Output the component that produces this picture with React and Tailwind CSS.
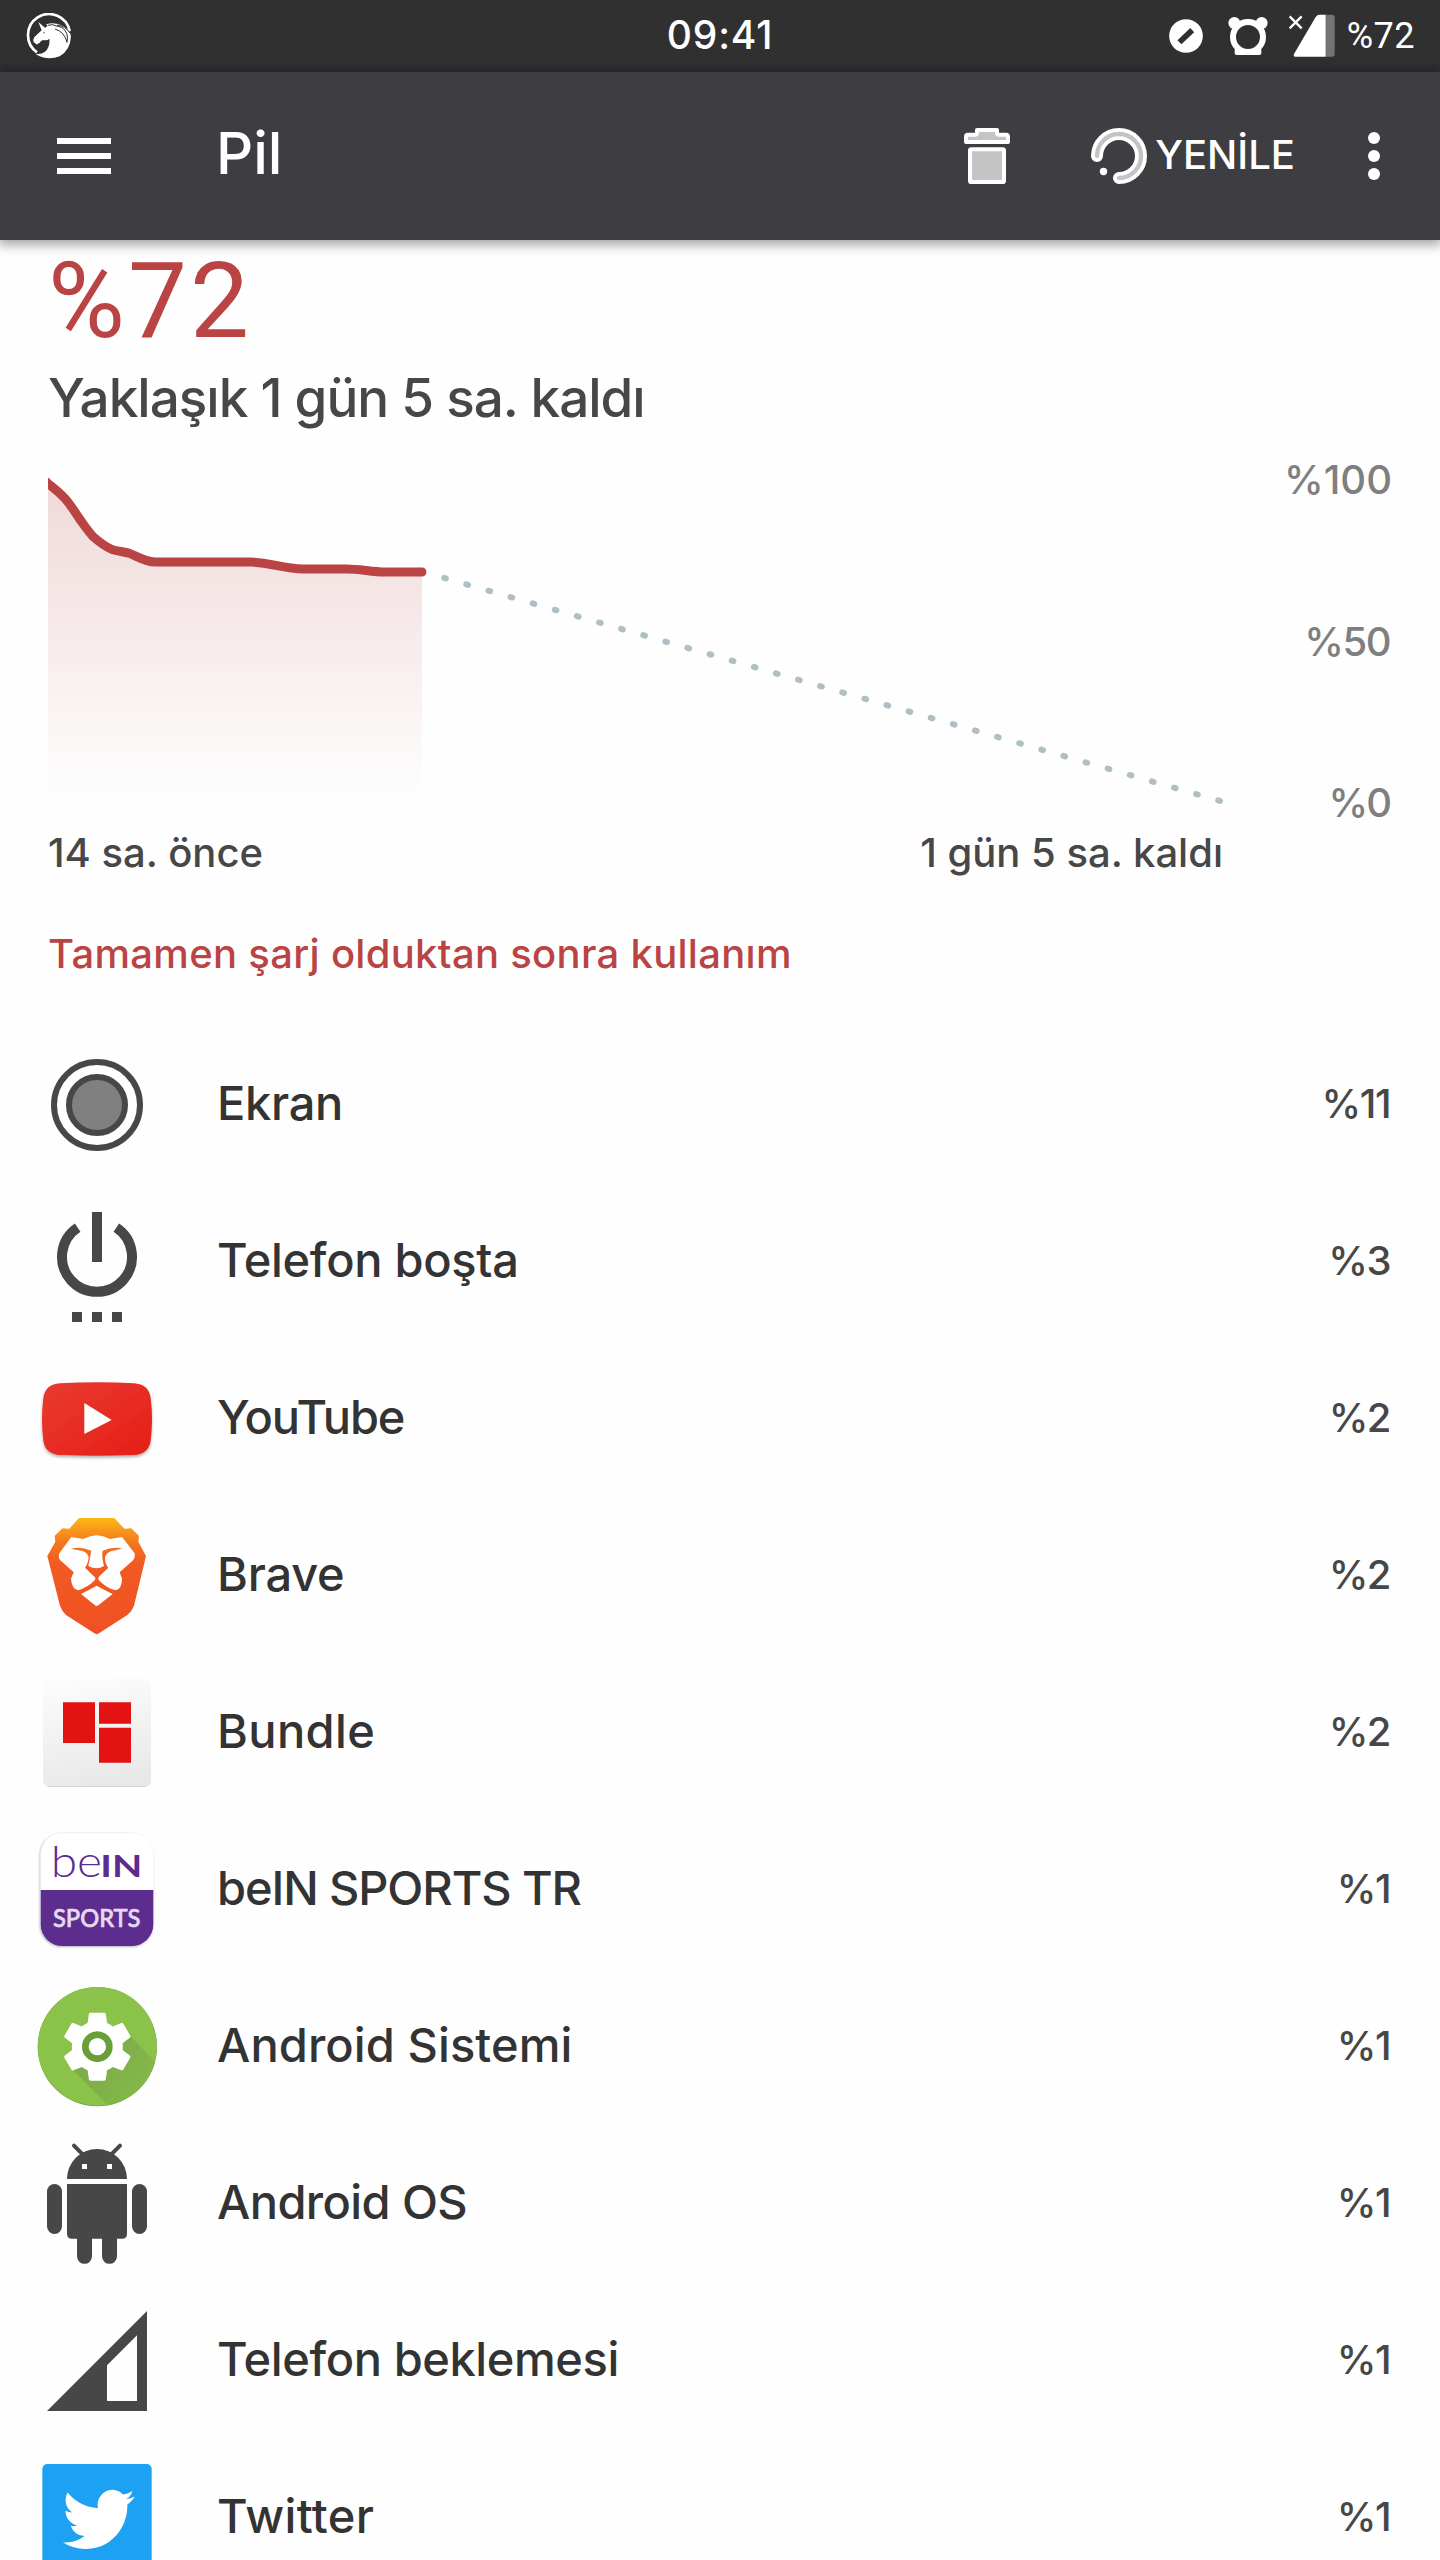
const apps = [
  { name: "Ekran", value: "%11", Icon: ScreenIcon, track: "tracking-[-0.3px]" },
  { name: "Telefon boşta", value: "%3", Icon: IdleIcon, track: "tracking-[-0.3px]" },
  { name: "YouTube", value: "%2", Icon: YouTubeIcon, track: "tracking-[-1.1px]" },
  { name: "Brave", value: "%2", Icon: BraveIcon, track: "tracking-[-0.2px]" },
  { name: "Bundle", value: "%2", Icon: BundleIcon, track: "tracking-[0.4px]" },
  { name: "beIN SPORTS TR", value: "%1", Icon: BeinIcon, track: "tracking-[-1.1px]" },
  { name: "Android Sistemi", value: "%1", Icon: SystemIcon, track: "tracking-[0.1px]" },
  { name: "Android OS", value: "%1", Icon: AndroidIcon, track: "tracking-[-0.6px]" },
  { name: "Telefon beklemesi", value: "%1", Icon: StandbyIcon, track: "tracking-[-0.4px]" },
  { name: "Twitter", value: "%1", Icon: TwitterIcon, track: "tracking-[0.4px]" },
];

export default function App() {
  return (
    <div className="w-[1440px] h-[2560px] overflow-hidden bg-[#fefefe] font-['Inter',sans-serif] font-[450] text-[#474747]">
      <StatusBar />
      <Toolbar />
      <main>
        <section className="pl-12">
          <h2 className="pt-[3px] text-[105px] leading-[118px] tracking-[3px] font-[450] text-[#ba4444] font-['Roboto',sans-serif]">%72</h2>
          <p className="text-[53px] leading-[74px] tracking-[-1px]">Yaklaşık 1 gün 5 sa. kaldı</p>
          <div className="mt-6 flex h-[365px]">
            <BatteryChart />
            <div className="flex flex-1 flex-col justify-between pr-12 text-right text-[40px] leading-[42px] text-[#7f7f7f]">
              <span>%100</span>
              <span className="pr-[2px] tracking-[-1.5px]">%50</span>
              <span className="pr-[2px] tracking-[-2px]">%0</span>
            </div>
          </div>
          <div className="flex w-[1175px] justify-between text-[40px] leading-[58px]">
            <span>14 sa. önce</span>
            <span>1 gün 5 sa. kaldı</span>
          </div>
        </section>
        <h3 className="mt-[42px] pl-12 text-[40px] leading-[60px] tracking-[0.3px] text-[#ba4444]">Tamamen şarj olduktan sonra kullanım</h3>
        <ul className="mt-10">
          {apps.map(({ name, value, Icon, track }) => (
            <li key={name} className="flex h-[157px] items-center pt-px pl-[37px] pr-[50px]">
              <Icon />
              <span className={`ml-[60px] flex-1 text-[47px] text-[#333] ${track}`}>{name}</span>
              <span className="pt-px text-[40px] tracking-[-1.5px]">{value}</span>
            </li>
          ))}
        </ul>
      </main>
    </div>
  );
}

function StatusBar() {
  return (
    <div className="grid h-[72px] grid-cols-3 items-center bg-[#303031] pb-px text-white">
      <svg className="ml-[25px]" width="47" height="46" viewBox="74 38 141 138">
        <path d="M110 156A63 63 0 1 1 208 93" fill="none" stroke="#fff" strokeWidth="8" />
        <path d="M114 65L134 82L141 78L138 72Q165 64 189 78Q209 89 212 108Q210 150 178 168Q140 183 106 161Q124 163 134 154Q150 141 147 115Q140 122 128 119Q120 122 118 128Q114 127 112 132Q107 133 104 128Q98 126 99 118Q101 109 108 105L124 90Z" fill="#fff" />
        <path d="M142 75Q160 70 167 77Q186 78 195 92Q204 104 200 126Q193 95 164 86M170 74Q196 78 209 98" fill="none" stroke="#303031" strokeWidth="3" />
        <circle cx="131" cy="97" r="2" fill="#303031" />
      </svg>
      <span className="text-center text-[39px] tracking-[0.8px]">09:41</span>
      <div className="flex items-center justify-end pr-[25px]">
        <svg width="34" height="34" viewBox="688 57 101 101">
          <circle cx="738.5" cy="107.5" r="50" fill="#fff" />
          <path d="M719 126L757 90" stroke="#303031" strokeWidth="17" />
        </svg>
        <svg className="ml-[25px]" width="40" height="38" viewBox="864 48 120 114">
          <circle cx="883" cy="66" r="18" fill="#fff" />
          <circle cx="965" cy="66" r="18" fill="#fff" />
          <path d="M889 134H959L964 146V156Q964 162 958 162H890Q884 162 884 156V146Z" fill="#fff" />
          <circle cx="924" cy="108" r="45" fill="#303031" stroke="#fff" strokeWidth="18" />
        </svg>
        <svg className="ml-[20px]" width="47" height="43" viewBox="1045 43 141 129">
          <path d="M1050 50L1086 86M1086 50L1050 86" stroke="#fff" strokeWidth="7" />
          <path d="M1158 45H1177Q1185 45 1185 53V163Q1185 171 1177 171H1158Z" fill="#747476" />
          <path d="M1063 163L1128 52Q1132 45 1140 45H1158V171H1067Q1060 171 1063 163Z" fill="#fff" />
        </svg>
        <span className="ml-[12px] text-[36px] tracking-[0.5px] font-['Roboto',sans-serif]">%72</span>
      </div>
    </div>
  );
}

function Toolbar() {
  return (
    <header className="relative flex h-[168px] items-center bg-[#3e3e42] pl-[57px] text-white shadow-[0_2px_12px_2px_rgba(0,0,0,0.4)]">
      <svg width="54" height="36" viewBox="0 0 54 36" fill="#fff">
        <path d="M0 0h54v6H0zM0 15h54v6H0zM0 30h54v6H0z" />
      </svg>
      <h1 className="ml-[105px] flex-1 pb-[5px] text-[58px]">Pil</h1>
      <svg width="46" height="56" viewBox="72 384 138 168" fill="#c4c4c4" stroke="#fff" strokeWidth="12" strokeLinejoin="round">
        <path d="M111 390H171V398Q171 404 178 404H198Q204 404 204 410V426H78V410Q78 404 84 404H104Q111 404 111 398Z" />
        <rect x="90" y="448" width="102" height="98" rx="4" />
      </svg>
      <svg className="ml-[81px]" width="56" height="56" viewBox="453 384 168 168" fill="none" strokeLinecap="round">
        <path d="M471 468A66 66 0 1 1 537 534" stroke="#fff" strokeWidth="36" />
        <path d="M471 468A66 66 0 1 1 537 534" stroke="#c4c4c4" strokeWidth="13" />
        <circle cx="490.5" cy="514.5" r="11" fill="#fff" />
      </svg>
      <span className="ml-[8px] pb-[2px] text-[40px]">YENİLE</span>
      <svg className="ml-[73px] mr-[60px]" width="12" height="48" viewBox="0 0 12 48" fill="#fff">
        <circle cx="6" cy="6" r="6" />
        <circle cx="6" cy="24" r="6" />
        <circle cx="6" cy="42" r="6" />
      </svg>
    </header>
  );
}

function BatteryChart() {
  const curve = "M44 480L48 483.5C54 488 60 493 65 498.5C70 504 75 512 80 519.5C84 525 88 531 93 536.5C98 541 104 546 112 549.5C118 551.5 124 551.5 130 553.5C138 557 146 562 155 562H250C268 562 284 569 303 569H347C360 569 372 572 385 572H422";
  return (
    <svg className="flex-none" width="1180" height="365" viewBox="48 459 1180 365" fill="none">
      <defs>
        <linearGradient id="level" x1="0" y1="484" x2="0" y2="798" gradientUnits="userSpaceOnUse">
          <stop offset="0" stopColor="#ba4444" stopOpacity="0.2" />
          <stop offset="1" stopColor="#ba4444" stopOpacity="0" />
        </linearGradient>
      </defs>
      <path d={`${curve}V798H48V483Z`} fill="url(#level)" />
      <path d={curve} stroke="#ba4444" strokeWidth="9" strokeLinecap="round" />
      <path d="M444.2 578L1221 801.2" stroke="#b0bec5" strokeWidth="6" strokeLinecap="round" strokeDasharray="1.75 21.26" />
    </svg>
  );
}

function RowIcon({ viewBox, children }) {
  return (
    <svg className="flex-none overflow-visible" width="120" height="120" viewBox={viewBox}>
      {children}
    </svg>
  );
}

function ScreenIcon() {
  return (
    <RowIcon viewBox="111 9 360 360">
      <circle cx="291" cy="195" r="129" fill="none" stroke="#474747" strokeWidth="18" />
      <circle cx="291" cy="195" r="84" fill="#808080" stroke="#474747" strokeWidth="18" />
    </RowIcon>
  );
}

function IdleIcon() {
  return (
    <RowIcon viewBox="111 480 360 360">
      <path d="M233 563A105 105 0 1 0 349 563" fill="none" stroke="#474747" strokeWidth="30" />
      <path d="M276 516h30v150h-30zM216 816h30v30h-30zM276 816h30v30h-30zM336 816h30v30h-30z" fill="#474747" />
    </RowIcon>
  );
}

function YouTubeIcon() {
  return (
    <RowIcon viewBox="111 51 360 360">
      <defs>
        <linearGradient id="yt" x1="0" y1="0" x2="1" y2="1">
          <stop offset="0" stopColor="#e93a32" />
          <stop offset="1" stopColor="#e51f16" />
        </linearGradient>
        <filter id="ytShadow" x="-10%" y="-10%" width="120%" height="130%">
          <feDropShadow dx="0" dy="6" stdDeviation="4" floodOpacity="0.3" />
        </filter>
      </defs>
      <path d="M180 130Q291 124 402 130Q446 132 452 174Q460 238 452 302Q446 342 402 345Q291 350 180 345Q136 342 130 302Q122 238 130 174Q136 132 180 130Z" fill="url(#yt)" filter="url(#ytShadow)" />
      <path d="M253 189L335 240L253 282Z" fill="#fff" />
    </RowIcon>
  );
}

function BraveIcon() {
  return (
    <RowIcon viewBox="111 522 360 360">
      <defs>
        <linearGradient id="brave" x1="0" y1="0" x2="0" y2="1">
          <stop offset="0" stopColor="#fcb913" />
          <stop offset="0.2" stopColor="#f37a20" />
          <stop offset="0.4" stopColor="#f15a22" />
          <stop offset="1" stopColor="#ef5023" />
        </linearGradient>
      </defs>
      <path d="M237 534H343L373 566L394 565L417 588L415 605L438 648L402 797Q396 814 382 825L297 880Q290 885 283 880L198 825Q186 814 180 797L142 648L166 605L164 588L187 565L208 566Z" fill="url(#brave)" />
      <path d="M214 591L250 597Q270 586 290 586Q310 586 330 597L366 591L404 640Q406 652 400 660L359 697L366 716Q366 746 347 751Q320 744 298 722Q292 716 298 709L325 683Q314 672 315 652Q318 640 332 634L367 626Q340 618 308 632Q304 646 312 678Q290 692 265 678L274 632Q242 618 213 626L250 634Q264 640 266 652Q264 672 255 683L284 711Q289 716 284 721Q264 742 234 751Q215 746 213 716L221 697L180 660Q174 652 178 640Z" fill="#fff" />
      <path d="M243 762Q270 748 290 737Q310 748 338 762L295 796Q290 800 285 796Z" fill="#fff" />
    </RowIcon>
  );
}

function BundleIcon() {
  return (
    <RowIcon viewBox="111 33 360 360">
      <defs>
        <linearGradient id="bundle" x1="0.3" y1="0" x2="0.5" y2="1">
          <stop offset="0" stopColor="#fcfcfc" />
          <stop offset="1" stopColor="#e8e8e8" />
        </linearGradient>
      </defs>
      <rect x="129" y="57" width="324" height="324" rx="18" fill="url(#bundle)" />
      <path d="M145 379.5H437" stroke="#d6d6d6" strokeWidth="3" />
      <path d="M189 127h96v122h-96zM297 127h96v64h-96zM297 203h96v105h-96z" fill="#e31313" />
    </RowIcon>
  );
}

function BeinIcon() {
  return (
    <RowIcon viewBox="111 504 360 360">
      <defs>
        <filter id="beinShadow" x="-10%" y="-10%" width="120%" height="120%">
          <feDropShadow dx="-2" dy="2" stdDeviation="3" floodOpacity="0.35" />
        </filter>
      </defs>
      <rect x="122" y="520" width="338" height="338" rx="64" fill="#fff" filter="url(#beinShadow)" />
      <path d="M122 690H460V794A64 64 0 0 1 396 858H186A64 64 0 0 1 122 794Z" fill="#5c2d8e" />
      <text x="152" y="652" fontSize="128" fontWeight="300" fontFamily="Lato, sans-serif" fill="#5c2d8e" textLength="154" lengthAdjust="spacingAndGlyphs">be</text>
      <text x="301" y="652" fontSize="94" fontWeight="700" fontFamily="Lato, sans-serif" fill="#5c2d8e" textLength="126" lengthAdjust="spacingAndGlyphs">IN</text>
      <text x="159" y="800" fontSize="72" fontWeight="500" fontFamily="Lato, sans-serif" fill="#e4daee" stroke="#e4daee" strokeWidth="2" textLength="262" lengthAdjust="spacingAndGlyphs">SPORTS</text>
    </RowIcon>
  );
}

function SystemIcon() {
  return (
    <RowIcon viewBox="111 75 360 360">
      <defs>
        <clipPath id="disc"><circle cx="292" cy="260" r="179" /></clipPath>
        <linearGradient id="longShadow" x1="0" y1="0" x2="1" y2="1">
          <stop offset="0.3" stopColor="#7eae49" />
          <stop offset="1" stopColor="#8bc34a" />
        </linearGradient>
      </defs>
      <circle cx="292" cy="260" r="179" fill="#689f38" />
      <g clipPath="url(#disc)">
        <circle cx="292" cy="258" r="179" fill="#8bc34a" />
        <path d="M215 326L388 226L500 340L440 555Z" fill="url(#longShadow)" />
      </g>
      <path transform="translate(169.6 137.6) scale(10.2)" fill="#fff" d="M19.43 12.98c.04-.32.07-.64.07-.98s-.03-.66-.07-.98l2.11-1.65c.19-.15.24-.42.12-.64l-2-3.46c-.12-.22-.39-.3-.61-.22l-2.49 1c-.52-.4-1.08-.73-1.69-.98l-.38-2.65C14.46 2.18 14.25 2 14 2h-4c-.25 0-.46.18-.49.42l-.38 2.65c-.61.25-1.17.59-1.69.98l-2.49-1c-.23-.09-.49 0-.61.22l-2 3.46c-.13.22-.07.49.12.64l2.11 1.65c-.04.32-.07.65-.07.98s.03.66.07.98l-2.11 1.65c-.19.15-.24.42-.12.64l2 3.46c.12.22.39.3.61.22l2.49-1c.52.4 1.08.73 1.69.98l.38 2.65c.03.24.24.42.49.42h4c.25 0 .46-.18.49-.42l.38-2.65c.61-.25 1.17-.59 1.69-.98l2.49 1c.23.09.49 0 .61-.22l2-3.46c.12-.22.07-.49-.12-.64z" />
      <circle cx="292" cy="260" r="36" fill="#fff" stroke="#689f38" strokeWidth="20" />
    </RowIcon>
  );
}

function AndroidIcon() {
  return (
    <RowIcon viewBox="111 546 360 360">
      <g fill="#474747">
        <path d="M201 657A90 90 0 0 1 381 657Z" />
        <path d="M222 557L248 583M360 557L334 583" stroke="#474747" strokeWidth="12" strokeLinecap="round" />
        <path d="M201 672H381V821Q381 836 366 836H351V889A22 22 0 0 1 306 889V836H276V889A22 22 0 0 1 231 889V836H216Q201 836 201 821Z" />
        <rect x="141" y="672" width="45" height="150" rx="22.5" />
        <rect x="396" y="672" width="45" height="150" rx="22.5" />
      </g>
      <path d="M246 612h15v15h-15zM321 612h15v15h-15z" fill="#fff" />
    </RowIcon>
  );
}

function StandbyIcon() {
  return (
    <RowIcon viewBox="111 117 360 360">
      <path d="M441 153V453H141ZM411 226L321 316V423H411Z" fill="#474747" fillRule="evenodd" />
    </RowIcon>
  );
}

function TwitterIcon() {
  return (
    <RowIcon viewBox="111 588 360 360">
      <rect x="127" y="612" width="328" height="340" rx="15" fill="#1da1f2" />
      <path transform="translate(188 669) scale(9 9.1)" fill="#fff" d="M23.953 4.57a10 10 0 01-2.825.775 4.958 4.958 0 002.163-2.723c-.951.555-2.005.959-3.127 1.184a4.92 4.92 0 00-8.384 4.482C7.69 8.095 4.067 6.13 1.64 3.162a4.822 4.822 0 00-.666 2.475c0 1.71.87 3.213 2.188 4.096a4.904 4.904 0 01-2.228-.616v.06a4.923 4.923 0 003.946 4.827 4.996 4.996 0 01-2.212.085 4.936 4.936 0 004.604 3.417 9.867 9.867 0 01-6.102 2.105c-.39 0-.779-.023-1.17-.067a13.995 13.995 0 007.557 2.209c9.053 0 13.998-7.496 13.998-13.985 0-.21 0-.42-.015-.63A9.935 9.935 0 0024 4.59z" />
    </RowIcon>
  );
}
